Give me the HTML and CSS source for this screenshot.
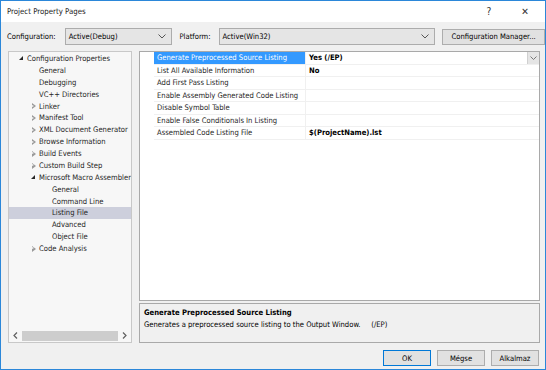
FILE: index.html
```html
<!DOCTYPE html>
<html lang="en">
<head>
  <meta charset="UTF-8" />
  <title>Project Property Pages</title>
  <link rel="stylesheet" href="styles.css">
</head>
<body>
  <div class="window">
    <div class="titlebar">
      <span class="title">Project Property Pages</span>
      <span class="tb-btn help">?</span>
      <span class="tb-btn close">&#x2715;</span>
    </div>

    <div class="toolbar">
      <label class="lbl">Configuration:</label>
      <div class="combo combo-config">
        <span>Active(Debug)</span>
        <svg class="chev" width="8" height="5" viewBox="0 0 8 5"><path d="M0.5 0.5 L4 4 L7.5 0.5" fill="none" stroke="#555" stroke-width="1"/></svg>
      </div>
      <label class="lbl lbl-platform">Platform:</label>
      <div class="combo combo-platform">
        <span>Active(Win32)</span>
        <svg class="chev" width="8" height="5" viewBox="0 0 8 5"><path d="M0.5 0.5 L4 4 L7.5 0.5" fill="none" stroke="#555" stroke-width="1"/></svg>
      </div>
      <button class="btn btn-manager">Configuration Manager...</button>
    </div>

    <div class="main">
      <!-- tree on the left -->
      <div class="tree">
        <div class="tree-items">
          <div class="node lvl0"><span class="tw open"></span>Configuration Properties</div>
          <div class="node lvl1"><span class="tw"></span>General</div>
          <div class="node lvl1"><span class="tw"></span>Debugging</div>
          <div class="node lvl1"><span class="tw"></span>VC++ Directories</div>
          <div class="node lvl1"><span class="tw closed"></span>Linker</div>
          <div class="node lvl1"><span class="tw closed"></span>Manifest Tool</div>
          <div class="node lvl1"><span class="tw closed"></span>XML Document Generator</div>
          <div class="node lvl1"><span class="tw closed"></span>Browse Information</div>
          <div class="node lvl1"><span class="tw closed"></span>Build Events</div>
          <div class="node lvl1"><span class="tw closed"></span>Custom Build Step</div>
          <div class="node lvl1"><span class="tw open"></span>Microsoft Macro Assembler</div>
          <div class="node lvl2"><span class="tw"></span>General</div>
          <div class="node lvl2"><span class="tw"></span>Command Line</div>
          <div class="node lvl2 selected"><span class="tw"></span>Listing File</div>
          <div class="node lvl2"><span class="tw"></span>Advanced</div>
          <div class="node lvl2"><span class="tw"></span>Object File</div>
          <div class="node lvl1"><span class="tw closed"></span>Code Analysis</div>
        </div>
        <div class="hscroll">
          <svg width="5" height="7" viewBox="0 0 5 7"><path d="M4 0.5 L1 3.5 L4 6.5" fill="none" stroke="#606060" stroke-width="1.2"/></svg>
          <div class="thumb"></div>
          <svg width="5" height="7" viewBox="0 0 5 7"><path d="M1 0.5 L4 3.5 L1 6.5" fill="none" stroke="#606060" stroke-width="1.2"/></svg>
        </div>
      </div>

      <div class="right">
        <div class="grid">
          <div class="row active">
            <div class="gut"></div>
            <div class="name">Generate Preprocessed Source Listing</div>
            <div class="value">Yes (/EP)
              <span class="drop"><svg width="7" height="4" viewBox="0 0 7 4"><path d="M0.5 0.5 L3.5 3.5 L6.5 0.5" fill="none" stroke="#777" stroke-width="1"/></svg></span>
            </div>
          </div>
          <div class="row">
            <div class="gut"></div>
            <div class="name">List All Available Information</div>
            <div class="value">No</div>
          </div>
          <div class="row">
            <div class="gut"></div>
            <div class="name">Add First Pass Listing</div>
            <div class="value"></div>
          </div>
          <div class="row">
            <div class="gut"></div>
            <div class="name">Enable Assembly Generated Code Listing</div>
            <div class="value"></div>
          </div>
          <div class="row">
            <div class="gut"></div>
            <div class="name">Disable Symbol Table</div>
            <div class="value"></div>
          </div>
          <div class="row">
            <div class="gut"></div>
            <div class="name">Enable False Conditionals In Listing</div>
            <div class="value"></div>
          </div>
          <div class="row">
            <div class="gut"></div>
            <div class="name">Assembled Code Listing File</div>
            <div class="value">$(ProjectName).lst</div>
          </div>
        </div>

        <div class="desc">
          <div class="desc-title">Generate Preprocessed Source Listing</div>
          <div class="desc-text">Generates a preprocessed source listing to the Output Window. &nbsp;&nbsp;&nbsp;&nbsp;(/EP)</div>
        </div>
      </div>
    </div>

    <div class="footer">
      <button class="btn btn-ok">OK</button>
      <button class="btn">Mégse</button>
      <button class="btn">Alkalmaz</button>
    </div>
  </div>
</body>
</html>
```

FILE: styles.css
```css
html, body {
  margin: 0;
  padding: 0;
}

body {
  font-family: "DejaVu Sans Condensed", "Liberation Sans", Arial, sans-serif;
  font-size: 7.6px;
  color: #000;
  background: #fff;
}

.window {
  width: 546px;
  height: 370px;
  box-sizing: border-box;
  border: 1px solid #2b87d9;
  background-color: #f0f0f0;
  display: flex;
  flex-direction: column;
}

.titlebar {
  height: 21px;
  background-color: #fff;
  display: flex;
  align-items: center;
  padding-left: 6px;
}

.title {
  flex: 1;
  font-size: 7.8px;
  color: #222;
}

.tb-btn {
  width: 36px;
  text-align: center;
  font-size: 10px;
  color: #333;
}

.help {
  margin-right: 0;
}

.close {
  font-size: 10px;
  margin-right: 2px;
}

.toolbar {
  display: flex;
  align-items: center;
  height: 17px;
  margin-top: 6px;
  padding-left: 6px;
}

.lbl {
  margin-right: 9px;
}

.lbl-platform {
  margin-left: 7px;
  margin-right: 8px;
}

.combo {
  height: 17px;
  box-sizing: border-box;
  border: 1px solid #acacac;
  background-color: #e5e5e5;
  display: flex;
  align-items: center;
  justify-content: space-between;
  padding: 0 5px 0 3px;
}

.combo-config {
  width: 108px;
}

.combo-platform {
  width: 217px;
}

.btn {
  font-family: inherit;
  font-size: 7.6px;
  color: #000;
  height: 16px;
  box-sizing: border-box;
  border: 1px solid #adadad;
  background-color: #e1e1e1;
  padding: 0;
  margin: 0;
}

.btn-manager {
  width: 103px;
  margin-left: 7px;
}

.main {
  display: flex;
  margin-top: 6px;
  height: 292px;
  padding-left: 7px;
}

.tree {
  width: 124px;
  box-sizing: border-box;
  border: 1px solid #c8c8c8;
  background-color: #f7f7f7;
  display: flex;
  flex-direction: column;
}

.tree-items {
  flex: 1;
  overflow: hidden;
  padding-top: 1px;
}

.node {
  height: 11.875px;
  line-height: 11.875px;
  white-space: nowrap;
  display: flex;
  align-items: center;
  color: #1e1e1e;
}

.node.selected {
  background-color: #cdcfdc;
}

.tw {
  display: inline-block;
  width: 9px;
  height: 9px;
  flex: none;
  position: relative;
}

.tw.open::before {
  content: "";
  position: absolute;
  left: 2px;
  top: 2px;
  border-left: 4px solid transparent;
  border-bottom: 4px solid #262626;
}

.tw.closed::before {
  content: "";
  position: absolute;
  left: 3px;
  top: 1.5px;
  width: 0;
  height: 0;
  border-top: 3px solid transparent;
  border-bottom: 3px solid transparent;
  border-left: 4px solid #9a9a9a;
}

.tw.closed::after {
  content: "";
  position: absolute;
  left: 3px;
  top: 3px;
  width: 0;
  height: 0;
  border-top: 1.5px solid transparent;
  border-bottom: 1.5px solid transparent;
  border-left: 2px solid #f7f7f7;
}

.lvl0 {
  padding-left: 8px;
}

.lvl1 {
  padding-left: 20px;
}

.lvl2 {
  padding-left: 33px;
}

.lvl0 .tw, .lvl1 .tw, .lvl2 .tw {
  margin-right: 1px;
}

.hscroll {
  height: 11px;
  margin-bottom: 1px;
  display: flex;
  align-items: center;
  padding: 0 4px;
  gap: 4px;
}

.thumb {
  flex: 1;
  height: 10px;
  background-color: #cdcdcd;
}

.right {
  width: 401px;
  margin-left: 7px;
  display: flex;
  flex-direction: column;
}

.grid {
  flex: 1;
  box-sizing: border-box;
  border: 1px solid #a9a9a9;
  background-color: #fff;
}

.row {
  display: grid;
  grid-template-columns: 14px 152px 1fr;
  height: 12.5px;
  line-height: 12.5px;
}

.gut {
  background-color: #fff;
}

.name {
  padding-left: 3px;
  border-bottom: 1px solid #f0f0f0;
  border-right: 1px solid #f0f0f0;
  white-space: nowrap;
  color: #1e1e1e;
  line-height: 11.5px;
}

.value {
  padding-left: 3px;
  font-weight: bold;
  border-bottom: 1px solid #f0f0f0;
  position: relative;
  line-height: 11.5px;
}

.row.active .name {
  background-color: #3399ff;
  color: #fff;
}

.drop {
  position: absolute;
  right: 0;
  top: 0;
  width: 11px;
  height: 12px;
  background-color: #e5e5e5;
  border-left: 1px solid #d0d0d0;
  display: flex;
  align-items: center;
  justify-content: center;
}

.desc {
  height: 40px;
  margin-top: 2px;
  box-sizing: border-box;
  border: 1px solid #a9a9a9;
  background-color: #f0f0f0;
  padding: 3px 4px;
}

.desc-title {
  font-weight: bold;
  line-height: 11px;
}

.desc-text {
  line-height: 13px;
}

.footer {
  display: flex;
  justify-content: flex-end;
  gap: 6px;
  margin-top: 7px;
  padding-right: 6px;
}

.footer .btn {
  width: 48px;
}

.btn-ok {
  border-color: #0078d7;
}
```
